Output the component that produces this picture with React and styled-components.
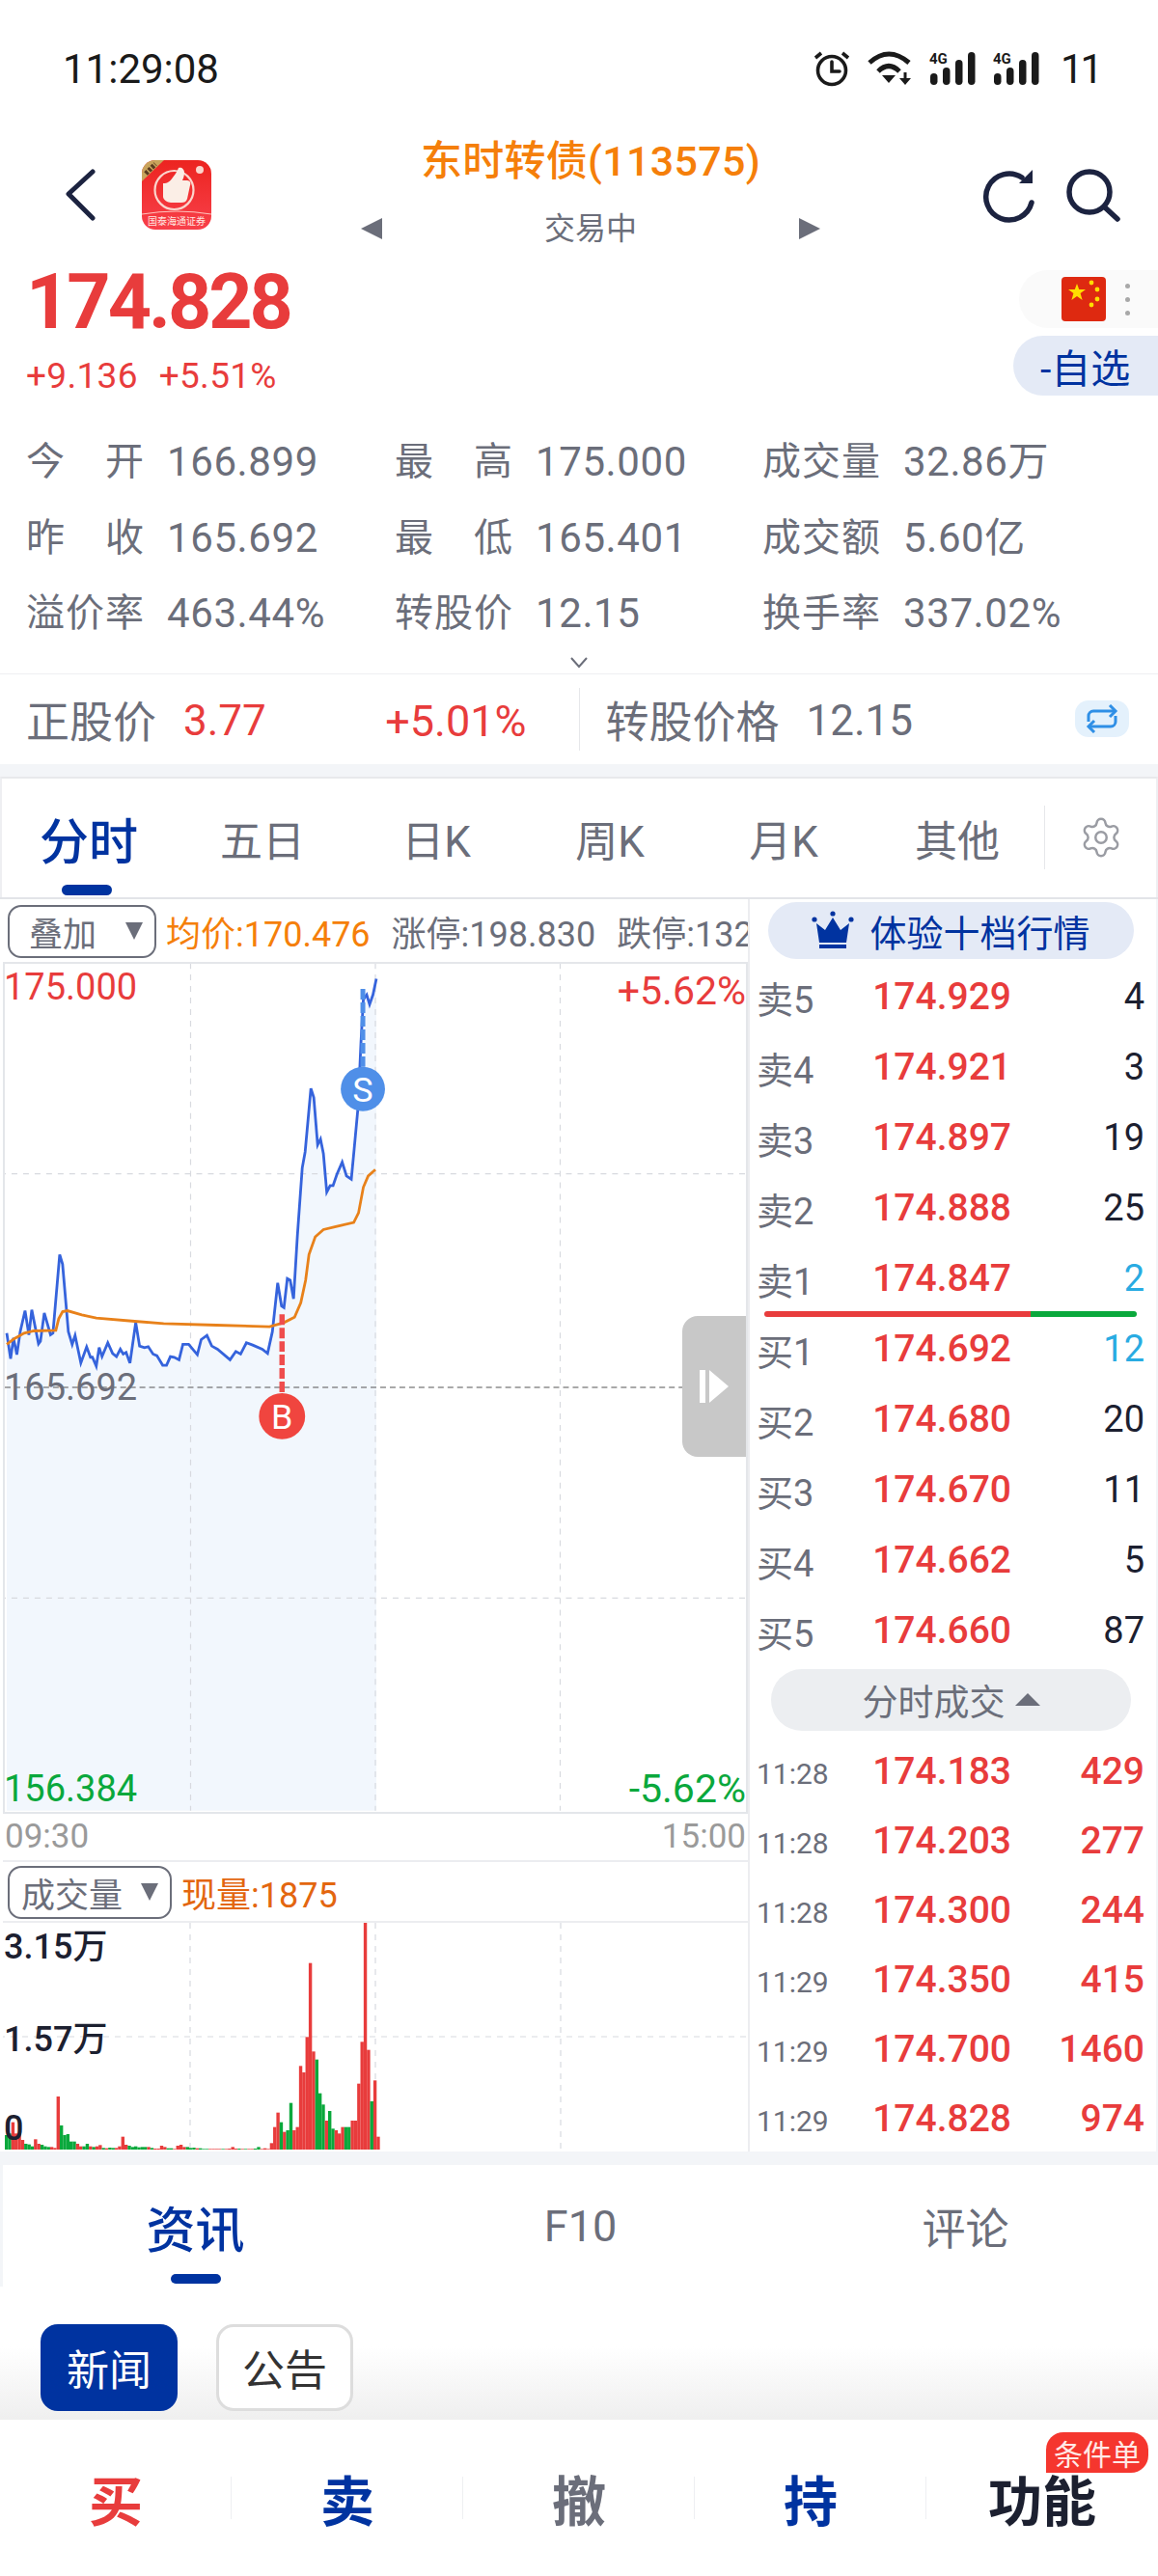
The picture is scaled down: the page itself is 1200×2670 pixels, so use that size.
import styled, { createGlobalStyle } from "styled-components"
import { Settings } from "lucide-react"

const RED = "#e83c3c"
const GREEN = "#0aa83c"
const BLUE = "#0033a0"
const GREY = "#6b6e7a"
const DARK = "#1c2030"
const ORANGE = "#f57f0a"

// chart traces, read off the reference at 2x / 3x zoom
const priceTrace = [[14,1205],[22,1285],[28,1220],[35,1272],[42,1200],[52,1135],[60,1210],[66,1132],[80,1238],[84,1230],[92,1142],[105,1210],[110,1205],[124,960],[130,990],[142,1200],[150,1240],[156,1212],[168,1298],[180,1248],[188,1280],[192,1280],[200,1308],[206,1250],[212,1278],[224,1235],[234,1268],[242,1278],[250,1255],[256,1270],[262,1265],[270,1298],[282,1172],[290,1245],[300,1250],[308,1247],[318,1270],[326,1275],[338,1305],[346,1305],[354,1278],[362,1280],[372,1288],[380,1240],[392,1240],[410,1272],[418,1225],[430,1212],[440,1245],[452,1255],[478,1288],[490,1262],[500,1270],[512,1235],[525,1242],[545,1255],[556,1268],[566,1200],[577,1048],[585,1120],[590,1125],[597,1035],[603,1040],[610,1098],[618,900],[628,690],[634,640],[646,442],[652,470],[660,618],[666,600],[672,645],[679,765],[686,745],[692,745],[700,710],[711,672],[720,715],[730,725],[736,630],[744,500],[750,300],[755,165],[762,150],[768,180],[775,150],[782,100]]
const avgTrace = [[14,1240],[30,1222],[50,1205],[70,1198],[116,1196],[122,1160],[130,1138],[140,1135],[170,1148],[200,1158],[280,1168],[340,1175],[450,1180],[560,1185],[590,1172],[612,1155],[625,1110],[635,1040],[642,960],[655,905],[672,882],[700,872],[735,860],[745,830],[755,750],[765,715],[780,695]]
const volumes = "g45 g50 r85 r50 r52 r30 g18 g16 g10 r32 r18 g15 g10 g8 r8 r5 r165 g75 g45 g48 g25 g25 r18 r10 g10 g18 r10 g8 r10 r14 g5 r4 g6 g5 r5 r10 r40 r15 g12 g8 g10 g7 g8 g8 r8 g5 r3 r3 r12 r8 g4 g4 r2 r12 r15 r8 g8 g5 g6 r4 g4 g2 g2 r2 r2 r2 r2 g2 r2 r3 r8 r3 g3 r2 g2 r2 r2 g3 g8 r2 r4 r2 r20 r70 r115 g85 r55 g60 g145 r60 r70 r260 r240 r350 r580 r305 g280 g175 g140 r90 g120 g65 r60 r50 r70 g70 g70 r90 r90 r205 r335 r705 r310 g150 r215 r40"
    .split(" ")
    .map(v => ({ up: v[0] === "r", h: Number(v.slice(1)) }))

const toPoints = trace => trace.map(([x, y]) => `${x / 2},${y / 3 - 17}`).join(" ")

const stats = [
    ["今开", "166.899"], ["最高", "175.000"], ["成交量", "32.86万"],
    ["昨收", "165.692"], ["最低", "165.401"], ["成交额", "5.60亿"],
    ["溢价率", "463.44%"], ["转股价", "12.15"], ["换手率", "337.02%"],
]
const tabs = ["分时", "五日", "日K", "周K", "月K", "其他"]
const asks = [["卖5", "174.929", "4"], ["卖4", "174.921", "3"], ["卖3", "174.897", "19"], ["卖2", "174.888", "25"], ["卖1", "174.847", "2", true]]
const bids = [["买1", "174.692", "12", true], ["买2", "174.680", "20"], ["买3", "174.670", "11"], ["买4", "174.662", "5"], ["买5", "174.660", "87"]]
const trades = [["11:28", "174.183", "429"], ["11:28", "174.203", "277"], ["11:28", "174.300", "244"], ["11:29", "174.350", "415"], ["11:29", "174.700", "1460"], ["11:29", "174.828", "974"]]
const actions = [["买", RED], ["卖", BLUE], ["撤", GREY], ["持", BLUE], ["功能", DARK]]

function SignalIcon(){
    return (
        <svg width="48" height="36" viewBox="0 0 48 36">
            <text x="0" y="13" fontSize="15" fontWeight="700" fontFamily="Roboto" fill="#1a1a1a">4G</text>
            <rect x="1" y="23" width="7.5" height="12" rx="3.7" fill="#1a1a1a"/>
            <rect x="14" y="17" width="7.5" height="18" rx="3.7" fill="#1a1a1a"/>
            <rect x="27" y="9" width="7.5" height="26" rx="3.7" fill="#1a1a1a"/>
            <rect x="40" y="1" width="7.5" height="34" rx="3.7" fill="#1a1a1a"/>
        </svg>
    )
}

function Logo(){
    return (
        <svg width="72" height="72" viewBox="0 0 72 72">
            <defs>
                <linearGradient id="logoRed" x1="0" y1="0" x2="0" y2="1">
                    <stop offset="0" stopColor="#ec2420"/>
                    <stop offset="1" stopColor="#f8404a"/>
                </linearGradient>
            </defs>
            <rect width="72" height="72" rx="14" fill="url(#logoRed)"/>
            <path d="M0 22V14A14 14 0 0 1 14 0H23Z" fill="#c9a45c"/>
            <path d="M4 14L14 4" stroke="#5a3a20" strokeWidth="5" strokeDasharray="3 1.5"/>
            <circle cx="33.5" cy="31" r="20" fill="none" stroke="#fbd5cd" strokeWidth="2.2"/>
            <path d="M22 24c5 0 7-2 10-6 3-4 5-7 6-10 3-1 6 1 6 5 0 3-1 6-2 8h5c3 0 4 3 3 5l-3 14c-1 3-3 4-6 4H30c-3 0-8-3-8-6Z" fill="#fbeee6"/>
            <circle cx="60" cy="10" r="4" fill="#fbd5cd"/>
            <path d="M0 56Q36 50 72 56" fill="none" stroke="#ffc4bd" strokeWidth="1"/>
            <text x="36" y="67" textAnchor="middle" fontSize="10" fill="#ffe6e0">国泰海通证券</text>
        </svg>
    )
}

export default function App(){
    return (
        <Page>
            <GlobalStyle/>
            <StatusBar>
                <Clock>11:29:08</Clock>
                <StatusIcons>
                    <svg width="38" height="38" viewBox="0 0 38 38" fill="none" stroke="#1a1a1a" strokeWidth="3.6">
                        <circle cx="19" cy="21" r="14.5"/>
                        <path d="M19 12v10h8" strokeLinecap="round"/>
                        <path d="M2 8l6-5M36 8l-6-5"/>
                    </svg>
                    <svg width="46" height="36" viewBox="0 0 46 36" fill="none" stroke="#1a1a1a" strokeWidth="5">
                        <path d="M2 12Q22 -6 43 12"/>
                        <path d="M11 21Q22 10 33 21"/>
                        <path d="M15 25h14l-7 8Z" fill="#1a1a1a" stroke="none"/>
                        <path d="M39 22v8" strokeWidth="3"/>
                        <path d="M33 28h12l-6 7Z" fill="#1a1a1a" stroke="none"/>
                    </svg>
                    <SignalIcon/>
                    <SignalIcon/>
                    <Battery>11</Battery>
                </StatusIcons>
            </StatusBar>

            <Header>
                <HeaderLeft>
                    <svg width="32" height="54" viewBox="0 0 32 54" fill="none" stroke="#1c2340" strokeWidth="5" strokeLinecap="round" strokeLinejoin="round">
                        <path d="M28 3L3 26l25 25"/>
                    </svg>
                    <Logo/>
                </HeaderLeft>
                <HeaderCenter>
                    <Title>东时转债(113575)</Title>
                    <SubTitle>
                        <Caret $dir="left" $size={11}/>
                        <span>交易中</span>
                        <Caret $dir="right" $size={11}/>
                    </SubTitle>
                </HeaderCenter>
                <HeaderRight>
                    <svg width="56" height="58" viewBox="0 0 56 58" fill="none" stroke="#1c2340" strokeWidth="5.5" strokeLinecap="round">
                        <path d="M52 37A24 24 0 1 1 42 11"/>
                        <path d="M53 3v14H39Z" fill="#1c2340" stroke="none"/>
                    </svg>
                    <svg width="58" height="56" viewBox="0 0 58 56" fill="none" stroke="#1c2340" strokeWidth="5.5" strokeLinecap="round">
                        <circle cx="25" cy="25" r="21"/>
                        <path d="M41 41l13 12"/>
                    </svg>
                </HeaderRight>
            </Header>

            <QuoteRow>
                <div>
                    <Price>174.828</Price>
                    <Change>
                        <span>+9.136</span>
                        <span>+5.51%</span>
                    </Change>
                </div>
                <QuoteSide>
                    <FlagPill>
                        <svg width="46" height="46" viewBox="0 0 46 46">
                            <rect width="46" height="46" rx="4" fill="#de2910"/>
                            <polygon points="16,7 18.2,13 25,13 19.6,17 21.6,24 16,20 10.4,24 12.4,17 7,13 13.8,13" fill="#ffde00"/>
                            <circle cx="31" cy="6" r="2.4" fill="#ffde00"/>
                            <circle cx="37" cy="13" r="2.4" fill="#ffde00"/>
                            <circle cx="37" cy="23" r="2.4" fill="#ffde00"/>
                            <circle cx="31" cy="29" r="2.4" fill="#ffde00"/>
                        </svg>
                        <MoreDots><i/><i/><i/></MoreDots>
                    </FlagPill>
                    <WatchPill>-自选</WatchPill>
                </QuoteSide>
            </QuoteRow>

            <StatGrid>
                {stats.map(([label, value]) => (
                    <Stat key={label}>
                        <StatLabel>{label}</StatLabel>
                        <span>{value}</span>
                    </Stat>
                ))}
            </StatGrid>
            <Expand>
                <svg width="20" height="12" viewBox="0 0 20 12" fill="none" stroke={GREY} strokeWidth="2">
                    <path d="M2 1l8 9 8-9"/>
                </svg>
            </Expand>

            <StockRow>
                <StockHalf>
                    <StockName>正股价</StockName>
                    <StockValue $color={RED}>3.77</StockValue>
                    <StockPct>+5.01%</StockPct>
                </StockHalf>
                <StockHalf $second>
                    <StockName>转股价格</StockName>
                    <StockValue $color={GREY}>12.15</StockValue>
                    <SwapButton>
                        <svg width="36" height="30" viewBox="0 0 36 30" fill="none" stroke="#2f8fe6" strokeWidth="3">
                            <path d="M4 18V12a5 5 0 0 1 5-5h22"/>
                            <path d="M26 1l6 6-6 6"/>
                            <path d="M32 12v6a5 5 0 0 1-5 5H5"/>
                            <path d="M10 17l-6 6 6 6"/>
                        </svg>
                    </SwapButton>
                </StockHalf>
            </StockRow>
            <Band $height={13}/>

            <TabBar>
                {tabs.map((t, i) => <Tab key={t} $active={i === 0}>{t}</Tab>)}
                <GearCell><Settings size={46} strokeWidth={1.3} color="#9a9ca3"/></GearCell>
            </TabBar>

            <ChartRow>
                <ChartCol>
                    <OverlayBar>
                        <Select $width={154} $pad={20}>叠加<Caret $dir="down" $size={9}/></Select>
                        <InfoText $color={ORANGE}>均价:170.476</InfoText>
                        <InfoText $color={GREY} $gap={12}>涨停:198.830</InfoText>
                        <InfoText $color={GREY} $gap={12}>跌停:132.554</InfoText>
                    </OverlayBar>
                    <PriceChart>
                        <svg width="100%" height="100%" viewBox="5 2 770 879">
                            <polygon points={`7,881 ${toPoints(priceTrace)} 391,881`} fill="#f2f7fd"/>
                            <g stroke="#d8dadf" strokeWidth="1.2" strokeDasharray="6 6">
                                <path d="M198 0V881M390 0V881M582 0V881M0 219H775M0 660H775"/>
                            </g>
                            <path d="M5 441H775" stroke="#555" strokeWidth="1.2" strokeDasharray="6 4"/>
                            <polyline points={toPoints(priceTrace)} fill="none" stroke="#3563dc" strokeWidth="2.8"/>
                            <polyline points={toPoints(avgTrace)} fill="none" stroke="#e8811a" strokeWidth="2.8"/>
                            <path d="M293 365V450" stroke="#ef4d4d" strokeWidth="5.5" strokeDasharray="11 3"/>
                            <path d="M377 27V110" stroke="#4f8fe8" strokeWidth="5" strokeDasharray="11 3"/>
                            <circle cx="293" cy="471" r="24" fill="#f0453f"/>
                            <text x="293" y="484" textAnchor="middle" fontSize="36" fill="#fff" fontFamily="Roboto">B</text>
                            <circle cx="377" cy="131" r="23" fill="#4f8fe8"/>
                            <text x="377" y="144" textAnchor="middle" fontSize="36" fill="#fff" fontFamily="Roboto">S</text>
                        </svg>
                        <AxisLabel $top={4} $left={-1} $color={RED}>175.000</AxisLabel>
                        <AxisLabel $top={8} $right={0} $size={41} $color={RED}>+5.62%</AxisLabel>
                        <AxisLabel $top={419} $left={-1} $color={GREY}>165.692</AxisLabel>
                        <AxisLabel $top={835} $left={-1} $color={GREEN}>156.384</AxisLabel>
                        <AxisLabel $top={835} $right={0} $size={41} $color={GREEN}>-5.62%</AxisLabel>
                        <Handle>
                            <svg width="32" height="36" viewBox="0 0 32 36" fill="#fff">
                                <rect x="1" y="1" width="6" height="34"/>
                                <polygon points="11,1 31,18 11,35"/>
                            </svg>
                        </Handle>
                    </PriceChart>
                    <TimeRow>
                        <span>09:30</span>
                        <span>15:00</span>
                    </TimeRow>
                    <OverlayBar $height={61}>
                        <Select $width={170} $pad={12}>成交量<Caret $dir="down" $size={9}/></Select>
                        <InfoText $color="#e3660f">现量:1875</InfoText>
                    </OverlayBar>
                    <VolumeChart>
                        <svg width="100%" height="100%" viewBox="5 0 770 236">
                            <g stroke="#d8dadf" strokeWidth="1.2" strokeDasharray="6 6">
                                <path d="M198 0V236M390 0V236M582 0V236M0 118H775"/>
                            </g>
                            {volumes.map((v, i) => (
                                <rect key={i} x={6 + i * 3.35} y={235 - v.h / 3} width="3.4" height={v.h / 3} fill={v.up ? RED : GREEN}/>
                            ))}
                        </svg>
                        <VolumeLabel $top={4}>3.15万</VolumeLabel>
                        <VolumeLabel $top={100}>1.57万</VolumeLabel>
                        <VolumeLabel $top={192}>0</VolumeLabel>
                    </VolumeChart>
                </ChartCol>

                <BookCol>
                    <UpgradePill>
                        <svg width="44" height="40" viewBox="0 0 44 40" fill={BLUE}>
                            <circle cx="3" cy="9" r="2.6"/>
                            <circle cx="22" cy="3" r="2.6"/>
                            <circle cx="41" cy="9" r="2.6"/>
                            <path d="M5 13l9 7 8-13 8 13 9-7-3 20H8Z"/>
                            <rect x="8" y="35" width="28" height="4"/>
                        </svg>
                        体验十档行情
                    </UpgradePill>
                    {asks.map(([label, price, qty, hot]) => (
                        <BookRow key={label}>
                            <BookLabel>{label}</BookLabel>
                            <BookPrice>{price}</BookPrice>
                            <BookQty $hot={hot}>{qty}</BookQty>
                        </BookRow>
                    ))}
                    <DepthBar>
                        <DepthPart $color={RED} style={{ flexGrow: 276 }}/>
                        <DepthPart $color={GREEN} style={{ flexGrow: 110 }}/>
                    </DepthBar>
                    {bids.map(([label, price, qty, hot]) => (
                        <BookRow key={label}>
                            <BookLabel>{label}</BookLabel>
                            <BookPrice>{price}</BookPrice>
                            <BookQty $hot={hot}>{qty}</BookQty>
                        </BookRow>
                    ))}
                    <TradesToggle>分时成交<Caret $dir="up" $size={13}/></TradesToggle>
                    {trades.map(([time, price, qty], i) => (
                        <TradeRow key={i}>
                            <TradeTime>{time}</TradeTime>
                            <BookPrice>{price}</BookPrice>
                            <TradeQty>{qty}</TradeQty>
                        </TradeRow>
                    ))}
                </BookCol>
            </ChartRow>
            <Band $height={14}/>

            <InfoTabs>
                <InfoTab $active>资讯</InfoTab>
                <InfoTab>F10</InfoTab>
                <InfoTab>评论</InfoTab>
            </InfoTabs>
            <ChipRow>
                <Chip $active>新闻</Chip>
                <Chip>公告</Chip>
            </ChipRow>

            <ActionBar>
                {actions.map(([label, color]) => (
                    <Action key={label} $color={color}>{label}</Action>
                ))}
                <Badge>条件单</Badge>
            </ActionBar>
        </Page>
    )
}

const GlobalStyle = createGlobalStyle`
    body{
        margin: 0;
        background: #FFFFFF;
    }
`
const Page = styled.div`
    position: relative;
    width: 1200px;
    height: 2670px;
    overflow: hidden;
    background: #FFFFFF;
    font-family: Roboto, "Noto Sans CJK SC", sans-serif;
    color: ${GREY};
`
const StatusBar = styled.div`
    height: 142px;
    display: flex;
    align-items: center;
    justify-content: space-between;
    padding: 0 67px 0 65px;
    color: #1a1a1a;
`
const Clock = styled.div`
    font-size: 42px;
`
const StatusIcons = styled.div`
    display: flex;
    align-items: center;
    gap: 18px;
`
const Battery = styled.div`
    width: 34px;
    margin-left: 4px;
    font-size: 42px;
    letter-spacing: -3px;
`
const Header = styled.div`
    height: 120px;
    display: grid;
    grid-template-columns: 340px 544px 1fr;
    align-items: center;
`
const HeaderLeft = styled.div`
    display: flex;
    align-items: center;
    gap: 47px;
    padding-left: 68px;
`
const HeaderCenter = styled.div`
    display: flex;
    flex-direction: column;
    align-items: center;
    padding-bottom: 1px;
`
const Title = styled.div`
    color: ${ORANGE};
    font-size: 43px;
    font-weight: 500;
    line-height: 48px;
    letter-spacing: 0.3px;
`
const SubTitle = styled.div`
    width: 476px;
    margin-top: 22px;
    display: flex;
    align-items: center;
    justify-content: space-between;
    font-size: 32px;
    line-height: 48px;
`
const Caret = styled.i`
    display: inline-block;
    width: 0;
    height: 0;
    ${props => props.$dir === "left" && `
        border-top: ${props.$size}px solid transparent;
        border-bottom: ${props.$size}px solid transparent;
        border-right: ${props.$size * 2}px solid ${GREY};
    `}
    ${props => props.$dir === "right" && `
        border-top: ${props.$size}px solid transparent;
        border-bottom: ${props.$size}px solid transparent;
        border-left: ${props.$size * 2}px solid ${GREY};
    `}
    ${props => props.$dir === "down" && `
        border-left: ${props.$size}px solid transparent;
        border-right: ${props.$size}px solid transparent;
        border-top: ${props.$size * 2}px solid ${GREY};
    `}
    ${props => props.$dir === "up" && `
        border-left: ${props.$size}px solid transparent;
        border-right: ${props.$size}px solid transparent;
        border-bottom: ${props.$size}px solid ${GREY};
    `}
`
const HeaderRight = styled.div`
    display: flex;
    align-items: center;
    justify-content: flex-end;
    gap: 31px;
    padding-right: 38px;
`
const QuoteRow = styled.div`
    height: 176px;
    padding: 18px 0 0 27px;
    box-sizing: border-box;
    display: flex;
    justify-content: space-between;
`
const Price = styled.div`
    color: ${RED};
    font-size: 79px;
    font-weight: 700;
    line-height: 66px;
    letter-spacing: -3px;
`
const Change = styled.div`
    margin-top: 25px;
    display: flex;
    gap: 22px;
    color: ${RED};
    font-size: 37px;
    line-height: 38px;
    letter-spacing: 0.3px;
`
const QuoteSide = styled.div`
    display: flex;
    flex-direction: column;
    align-items: flex-end;
    gap: 8px;
`
const FlagPill = styled.div`
    width: 144px;
    height: 60px;
    box-sizing: border-box;
    padding-left: 44px;
    display: flex;
    align-items: center;
    gap: 20px;
    background: #FAFAFA;
    border-radius: 30px 0 0 30px;
`
const MoreDots = styled.div`
    display: flex;
    flex-direction: column;
    gap: 9px;
    i{
        width: 5px;
        height: 5px;
        border-radius: 50%;
        background: #A8A8A8;
    }
`
const WatchPill = styled.div`
    width: 150px;
    height: 62px;
    box-sizing: border-box;
    padding-left: 28px;
    display: flex;
    align-items: center;
    background: #E4EAF6;
    border-radius: 31px 0 0 31px;
    color: ${BLUE};
    font-size: 41px;
`
const StatGrid = styled.div`
    padding: 2px 0 0 27px;
    display: grid;
    grid-template-columns: 382px 381px 1fr;
    grid-auto-rows: 78.5px;
    align-items: center;
`
const Stat = styled.div`
    display: flex;
    align-items: center;
    gap: 24px;
    font-size: 42px;
    line-height: 50px;
    letter-spacing: 0.6px;
`
const StatLabel = styled.span`
    width: 122px;
    font-size: 40px;
    white-space: nowrap;
    text-align: justify;
    text-align-last: justify;
    letter-spacing: 0;
    word-break: break-all;
`
const Expand = styled.div`
    height: 22px;
    display: flex;
    align-items: center;
    justify-content: center;
`
const StockRow = styled.div`
    height: 94px;
    box-sizing: border-box;
    border-top: 1px solid #EEEFF2;
    display: flex;
`
const StockHalf = styled.div`
    flex: 1;
    margin: 14px 0;
    padding-left: 27px;
    display: flex;
    align-items: center;
    border-left: ${props => props.$second ? "1px solid #E6E7EA" : "none"};
`
const StockName = styled.span`
    font-size: 45px;
    margin-right: 28px;
`
const StockValue = styled.span`
    color: ${props => props.$color};
    font-size: 44px;
    padding-top: 4px;
`
const StockPct = styled.span`
    margin-left: auto;
    margin-right: 54px;
    color: ${RED};
    font-size: 45px;
    padding-top: 4px;
`
const SwapButton = styled.div`
    margin-left: auto;
    margin-right: 30px;
    width: 56px;
    height: 38px;
    display: flex;
    align-items: center;
    justify-content: center;
    background: #E4F1FC;
    border-radius: 14px;
`
const Band = styled.div`
    height: ${props => props.$height}px;
    background: #F3F5F8;
`
const TabBar = styled.div`
    height: 125px;
    box-sizing: border-box;
    border-top: 2px solid #E8E9EC;
    border-left: 2px solid #EEEFF2;
    border-right: 2px solid #EEEFF2;
    display: grid;
    grid-template-columns: repeat(6, 180px) 1fr;
    align-items: center;
`
const Tab = styled.div`
    position: relative;
    height: 100%;
    display: flex;
    align-items: center;
    justify-content: center;
    padding-top: 2px;
    box-sizing: border-box;
    color: ${props => props.$active ? BLUE : GREY};
    font-size: ${props => props.$active ? 51 : 44}px;
    font-weight: ${props => props.$active ? 500 : 400};
    &::after{
        content: "";
        display: ${props => props.$active ? "block" : "none"};
        position: absolute;
        left: 62px;
        bottom: 2px;
        width: 52px;
        height: 11px;
        border-radius: 6px;
        background: ${BLUE};
    }
`
const GearCell = styled.div`
    height: 66px;
    border-left: 1px solid #E6E7EA;
    display: flex;
    align-items: center;
    justify-content: center;
`
const ChartRow = styled.div`
    height: 1300px;
    box-sizing: border-box;
    border-top: 2px solid #E2E4E8;
    display: flex;
    overflow: hidden;
`
const ChartCol = styled.div`
    width: 775px;
    flex: none;
`
const OverlayBar = styled.div`
    height: ${props => props.$height || 65}px;
    padding: 2px 0 0 8px;
    box-sizing: border-box;
    display: flex;
    align-items: center;
    gap: 10px;
    overflow: hidden;
    white-space: nowrap;
`
const Select = styled.div`
    flex: none;
    width: ${props => props.$width}px;
    height: 55px;
    box-sizing: border-box;
    padding: 0 12px 0 ${props => props.$pad}px;
    display: flex;
    align-items: center;
    justify-content: space-between;
    border: 2px solid ${GREY};
    border-radius: 14px;
    font-size: 35px;
`
const InfoText = styled.span`
    flex: none;
    margin-left: ${props => props.$gap || 0}px;
    color: ${props => props.$color};
    font-size: 36px;
`
const PriceChart = styled.div`
    position: relative;
    height: 883px;
    margin-left: 3px;
    box-sizing: border-box;
    border: 2px solid #E4E6EA;
    svg{
        display: block;
    }
`
const AxisLabel = styled.span`
    position: absolute;
    top: ${props => props.$top}px;
    ${props => props.$left !== undefined ? `left: ${props.$left}px;` : `right: ${props.$right}px;`}
    color: ${props => props.$color};
    font-size: ${props => props.$size || 38}px;
    line-height: 40px;
`
const Handle = styled.div`
    position: absolute;
    top: 365px;
    right: 0;
    width: 66px;
    height: 146px;
    display: flex;
    align-items: center;
    justify-content: center;
    background: #C8C8C8;
    border-radius: 16px 0 0 16px;
`
const TimeRow = styled.div`
    height: 50px;
    margin-left: 3px;
    padding: 0 2px 0 2px;
    box-sizing: border-box;
    border-bottom: 2px solid #ECEDF0;
    display: flex;
    align-items: center;
    justify-content: space-between;
    color: #9A9A9A;
    font-size: 35px;
`
const VolumeChart = styled.div`
    position: relative;
    height: 238px;
    margin-left: 3px;
    box-sizing: border-box;
    border-top: 2px solid #ECEDF0;
    svg{
        display: block;
    }
`
const VolumeLabel = styled.span`
    position: absolute;
    top: ${props => props.$top}px;
    left: 1px;
    color: ${DARK};
    font-size: 36px;
    font-weight: 500;
    line-height: 42px;
`
const BookCol = styled.div`
    width: 425px;
    flex: none;
    box-sizing: border-box;
    padding: 3px 2px 0 7px;
    border-left: 2px solid #ECEDF0;
    border-right: 2px solid #F3F5F8;
`
const UpgradePill = styled.div`
    width: 379px;
    height: 59px;
    margin: 0 0 3px 12px;
    display: flex;
    align-items: center;
    justify-content: center;
    gap: 16px;
    background: #E4EAF6;
    border-radius: 30px;
    color: ${BLUE};
    font-size: 38px;
`
const BookRow = styled.div`
    height: 73px;
    display: grid;
    grid-template-columns: 103px 161px 138px;
    align-items: center;
`
const BookLabel = styled.span`
    font-size: 38px;
`
const BookPrice = styled.span`
    color: ${RED};
    font-size: 39px;
    font-weight: 500;
    text-align: right;
`
const BookQty = styled.span`
    color: ${props => props.$hot ? "#29ABE2" : DARK};
    font-size: 38px;
    text-align: right;
`
const DepthBar = styled.div`
    width: 386px;
    height: 6px;
    margin: -3px 0 -3px 8px;
    display: flex;
    border-radius: 3px;
    overflow: hidden;
`
const DepthPart = styled.div`
    background: ${props => props.$color};
`
const TradesToggle = styled.div`
    width: 373px;
    height: 64px;
    margin: 3px 0 6px 15px;
    display: flex;
    align-items: center;
    justify-content: center;
    gap: 10px;
    background: #ECEEF1;
    border-radius: 32px;
    font-size: 37px;
`
const TradeRow = styled.div`
    height: 72px;
    display: grid;
    grid-template-columns: 103px 161px 138px;
    align-items: center;
`
const TradeTime = styled.span`
    font-size: 30px;
    padding-top: 6px;
`
const TradeQty = styled.span`
    color: ${RED};
    font-size: 39px;
    font-weight: 500;
    text-align: right;
`
const InfoTabs = styled.div`
    height: 126px;
    box-sizing: border-box;
    border-left: 3px solid #F3F5F8;
    display: grid;
    grid-template-columns: repeat(3, 1fr);
`
const InfoTab = styled.div`
    position: relative;
    display: flex;
    align-items: center;
    justify-content: center;
    padding-top: 2px;
    color: ${props => props.$active ? BLUE : GREY};
    font-size: ${props => props.$active ? 51 : 45}px;
    font-weight: ${props => props.$active ? 500 : 400};
    &::after{
        content: "";
        display: ${props => props.$active ? "block" : "none"};
        position: absolute;
        left: 174px;
        bottom: 3px;
        width: 52px;
        height: 10px;
        border-radius: 5px;
        background: ${BLUE};
    }
`
const ChipRow = styled.div`
    height: 138px;
    box-sizing: border-box;
    padding: 39px 0 0 42px;
    display: flex;
    gap: 40px;
    background: linear-gradient(#FFFFFF 45%, #EFEFEF 100%);
`
const Chip = styled.div`
    width: 142px;
    height: 90px;
    box-sizing: border-box;
    display: flex;
    align-items: center;
    justify-content: center;
    border: ${props => props.$active ? "none" : "3px solid #DDDDDD"};
    border-radius: 18px;
    background: ${props => props.$active ? BLUE : "#FFFFFF"};
    color: ${props => props.$active ? "#FFFFFF" : "#333333"};
    font-size: 44px;
`
const ActionBar = styled.div`
    position: relative;
    height: 162px;
    display: grid;
    grid-template-columns: repeat(5, 240px);
    background: #FFFFFF;
`
const Action = styled.div`
    position: relative;
    display: flex;
    align-items: center;
    justify-content: center;
    padding-bottom: 1px;
    color: ${props => props.$color};
    font-size: 56px;
    font-weight: 700;
    &:not(:nth-child(5))::after{
        content: "";
        position: absolute;
        right: 0;
        top: 59px;
        height: 44px;
        width: 1px;
        background: #EEEFF2;
    }
`
const Badge = styled.div`
    position: absolute;
    left: 1084px;
    top: 13px;
    width: 106px;
    height: 42px;
    display: flex;
    align-items: center;
    justify-content: center;
    background: #F5362E;
    border-radius: 18px 18px 18px 0;
    color: #FFE9E6;
    font-size: 30px;
`
